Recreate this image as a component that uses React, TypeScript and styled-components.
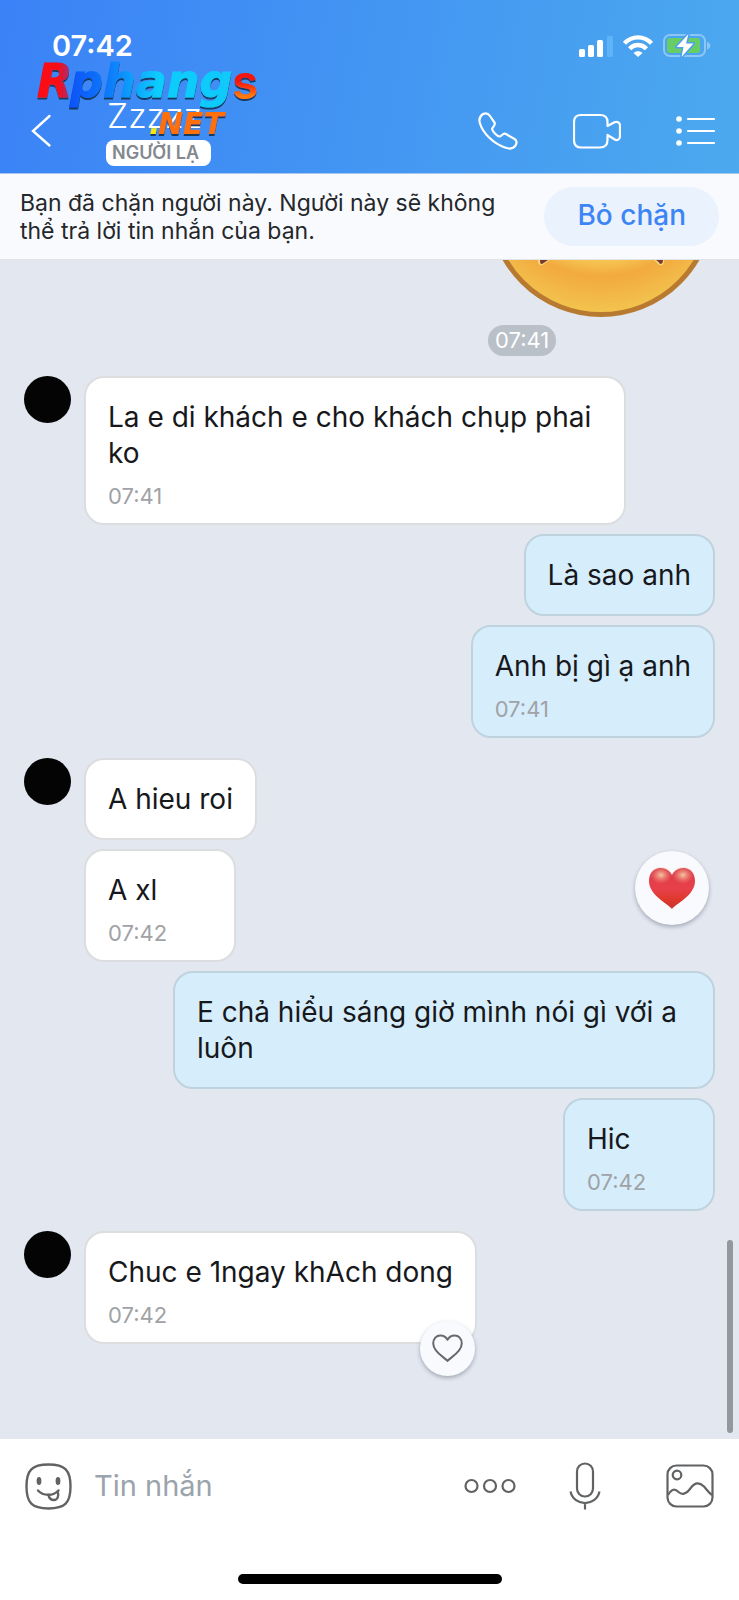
import React from "react";
import styled, { createGlobalStyle, css } from "styled-components";

const GlobalStyle = createGlobalStyle`
  *, *::before, *::after { box-sizing: border-box; }
  body { margin: 0; background: #ffffff; }
  body, button, input { font-family: Inter, Roboto, "Liberation Sans", sans-serif; }
  h1, p { margin: 0; }
  svg { display: block; }
`;

const Screen = styled.div`
  display: flex;
  flex-direction: column;
  min-height: 100vh;
  color: #16181b;
`;

const Header = styled.header`
  position: relative;
  background: linear-gradient(100deg, #3a82f7 0%, #4ca9ee 100%);
  border-bottom: 1px solid #a9c6ee;
  color: #ffffff;
`;

const StatusBar = styled.div`
  display: flex;
  align-items: center;
  justify-content: space-between;
  height: 92px;
  padding: 0 28px 0 52px;
`;

const Clock = styled.time`
  font-size: 29px;
  line-height: 36px;
  font-weight: 600;
`;

const StatusIcons = styled.div`
  display: flex;
  align-items: center;
  gap: 10px;
`;

const NavBar = styled.div`
  display: flex;
  align-items: flex-start;
  height: 81px;
  padding: 0 24px 0 28px;
`;

const IconButton = styled.button`
  display: flex;
  align-items: center;
  justify-content: center;
  flex: none;
  padding: 0;
  border: 0;
  background: none;
  color: inherit;
  cursor: pointer;
`;

const BackButton = styled(IconButton)`
  margin-top: 20px;
`;

const Contact = styled.div`
  display: flex;
  flex-direction: column;
  align-items: flex-start;
  flex: 1;
  gap: 2px;
  padding: 2px 0 0 50px;
`;

const ContactName = styled.h1`
  padding-left: 1px;
  font-size: 34px;
  line-height: 44px;
  font-weight: 300;
`;

const ContactTag = styled.span`
  padding: 0 12px 0 6px;
  border-radius: 8px;
  background: #ffffff;
  color: #83888f;
  font-size: 18px;
  line-height: 26px;
  font-weight: 600;
`;

const NavActions = styled.div`
  display: flex;
  align-items: center;
  gap: 55px;
  margin-top: 20px;
`;

const SiteMark = styled.svg`
  position: absolute;
  left: 34px;
  top: 54px;
  pointer-events: none;
`;

const Notice = styled.section`
  display: flex;
  align-items: center;
  justify-content: space-between;
  gap: 20px;
  padding: 13px 20px;
  background: #f9fafd;
  border-bottom: 1px solid #e0e3e9;
`;

const NoticeText = styled.p`
  flex: 1;
  color: #24272b;
  font-size: 23px;
  line-height: 28px;
`;

const UnblockButton = styled.button`
  flex: none;
  height: 59px;
  padding: 0 33px 3px;
  border: 0;
  border-radius: 30px;
  background: #eaf2fe;
  color: #3d85f5;
  font-size: 28px;
  line-height: 36px;
  font-weight: 500;
  cursor: pointer;
`;

const Chat = styled.main`
  position: relative;
  display: flex;
  flex-direction: column;
  flex: 1;
  gap: 20px;
  padding: 0 24px 92px;
  background: #e2e7f0;
`;

const StickerMessage = styled.div`
  display: flex;
  flex-direction: column;
  align-items: flex-start;
  gap: 8px;
  align-self: flex-end;
`;

const TimeChip = styled.time`
  padding: 0 7px;
  border-radius: 16px;
  background: #b9c0c8;
  color: #ffffff;
  font-size: 22px;
  line-height: 31px;
`;

const Turns = styled.div`
  display: flex;
  flex-direction: column;
  gap: 9px;
`;

const Received = styled.div`
  display: flex;
  align-items: flex-start;
  gap: 13px;
`;

const Avatar = styled.span`
  flex: none;
  width: 47px;
  height: 47px;
  border-radius: 50%;
  background: #040405;
`;

const Stack = styled.div<{ $mine?: boolean }>`
  display: flex;
  flex-direction: column;
  flex: 1;
  gap: 9px;
  align-items: ${(p) => (p.$mine ? "flex-end" : "flex-start")};
`;

const BubbleRow = styled.div`
  display: flex;
  align-items: flex-start;
  justify-content: space-between;
  align-self: stretch;
  padding-right: 6px;
`;

const BubbleBox = styled.article<{ $mine?: boolean; $timed?: boolean }>`
  position: relative;
  max-width: 542px;
  padding: 21px 22px;
  border: 2px solid #dcdddf;
  border-radius: 20px;
  background: #ffffff;
  ${(p) =>
    p.$timed &&
    css`
      min-width: 152px;
      padding-bottom: 14px;
    `}
  ${(p) =>
    p.$mine &&
    css`
      border-color: #bfd3de;
      background: #d6eefc;
    `}
`;

const BubbleText = styled.p`
  font-size: 28px;
  line-height: 36px;
`;

const BubbleTime = styled.time`
  display: block;
  margin-top: 12px;
  color: #a0a2a5;
  font-size: 22px;
  line-height: 26px;
`;

const RoundButton = styled(IconButton)<{ $size: number }>`
  width: ${(p) => p.$size}px;
  height: ${(p) => p.$size}px;
  border-radius: 50%;
  background: #f9fafd;
  box-shadow: 0 2px 4px rgba(70, 78, 92, 0.4);
`;

const ReactionButton = styled(RoundButton)`
  margin-top: 2px;
`;

const LikeButton = styled(RoundButton)`
  position: absolute;
  right: 0;
  bottom: -34px;
  color: #66696c;
`;

const ScrollThumb = styled.span`
  position: absolute;
  right: 6px;
  bottom: 6px;
  width: 6px;
  height: 193px;
  border-radius: 3px;
  background: #93989f;
`;

const Footer = styled.footer`
  display: flex;
  flex-direction: column;
  align-items: center;
  gap: 64px;
  padding: 23px 25px 16px;
  background: #ffffff;
`;

const Composer = styled.form`
  display: flex;
  align-items: center;
  width: 100%;
  color: #606264;
`;

const MessageInput = styled.input`
  flex: 1;
  min-width: 0;
  padding: 0 0 0 22px;
  border: 0;
  outline: 0;
  background: none;
  color: #16181b;
  font-size: 29px;
  line-height: 36px;
  &::placeholder { color: #9ba3ab; opacity: 1; }
`;

const ComposerActions = styled.div`
  display: flex;
  align-items: center;
  gap: 53px;
`;

const PictureButton = styled(IconButton)`
  margin-left: 12px;
`;

const HomeIndicator = styled.span`
  width: 264px;
  height: 10px;
  border-radius: 5px;
  background: #000000;
`;

const HEART =
  "M24 42C20.500 37 1 28.500 1 14C1 6 6 1 12.500 1C18 1 22 4 24 8C26 4 30 1 35.500 1C42 1 47 6 47 14C47 28.500 27.500 37 24 42Z";

function Bubble({
  children,
  time,
  mine,
  extra,
}: {
  children: React.ReactNode;
  time?: string;
  mine?: boolean;
  extra?: React.ReactNode;
}) {
  return (
    <BubbleBox $mine={mine} $timed={Boolean(time)}>
      <BubbleText>{children}</BubbleText>
      {time && <BubbleTime>{time}</BubbleTime>}
      {extra}
    </BubbleBox>
  );
}

function Signal() {
  return (
    <svg width="34" height="22" viewBox="0 0 34 22" fill="#fff" aria-hidden="true">
      <rect x="0" y="14" width="6" height="8" rx="1.500" />
      <rect x="9" y="10" width="6" height="12" rx="1.500" />
      <rect x="18" y="5" width="6" height="17" rx="1.500" />
      <rect x="28" y="1" width="6" height="21" rx="1.500" fill="#5fb4f8" />
    </svg>
  );
}

function Wifi() {
  return (
    <svg width="30" height="22" viewBox="0 0 30 22" aria-hidden="true">
      <g fill="none" stroke="#fff" strokeWidth="4.400">
        <path d="M1.500 8.300C9 .4 21 .4 28.500 8.300" />
        <path d="M6.600 13.800C11.400 8.800 18.600 8.800 23.400 13.800" />
      </g>
      <path d="M10.500 18C13 15.600 17 15.600 19.500 18L15 22Z" fill="#fff" />
    </svg>
  );
}

function Battery() {
  return (
    <svg width="48" height="24" viewBox="0 0 48 24" aria-hidden="true">
      <rect x="1" y="1" width="41" height="21" rx="6" fill="none" stroke="#8cc6f6" strokeWidth="2" />
      <path d="M44 8C48.500 9 48.500 14.500 44 15.500Z" fill="#8cc6f6" />
      <rect x="4" y="4" width="33" height="15" rx="3" fill="#69cd66" />
      <path
        d="M25.500 0L13.500 13H20.500L18.500 23L30.500 9.500H23Z"
        fill="#fff"
        stroke="#4a9ff0"
        strokeWidth="3"
        paintOrder="stroke"
        strokeLinejoin="round"
      />
    </svg>
  );
}

function Logo() {
  return (
    <SiteMark width="244" height="90" viewBox="0 0 244 90" role="img" aria-label="Rphangs.NET">
      <defs>
        <linearGradient id="mark-r" x1="0" x2="1">
          <stop offset="0.600" stopColor="#fb0a12" />
          <stop offset="1" stopColor="#8b3b93" />
        </linearGradient>
        <linearGradient id="mark-blue" x1="0" x2="1">
          <stop offset="0" stopColor="#0a52f6" />
          <stop offset="0.250" stopColor="#0f7cfb" />
          <stop offset="0.400" stopColor="#0fa4fb" />
          <stop offset="0.550" stopColor="#0ccdfc" />
          <stop offset="1" stopColor="#12c9fb" />
        </linearGradient>
        <linearGradient id="mark-s" x1="0" y1="0" x2="0" y2="1">
          <stop offset="0.500" stopColor="#f3150f" />
          <stop offset="0.750" stopColor="#ff7a08" />
        </linearGradient>
        <filter id="mark-edge" x="-5%" y="-5%" width="115%" height="120%">
          <feDropShadow dx="0" dy="2" stdDeviation="0" floodColor="#173a63" />
        </filter>
      </defs>
      <g
        fontFamily='"DejaVu Sans", sans-serif'
        fontWeight="700"
        fontStyle="italic"
        strokeLinejoin="miter"
        filter="url(#mark-edge)"
      >
        <text x="3" y="43" fontSize="46" fill="url(#mark-r)" stroke="url(#mark-r)">R</text>
        <text x="36" y="43" fontSize="46" fill="url(#mark-blue)" stroke="url(#mark-blue)">phang</text>
        <text x="115" y="80" fontSize="30" fill="#f2e90f">.</text>
        <text x="124" y="80" fontSize="30" fill="#ff7008">NET</text>
      </g>
      <text
        x="198"
        y="45"
        fontFamily="Inter, sans-serif"
        fontWeight="600"
        fontSize="48"
        fill="url(#mark-s)"
        filter="url(#mark-edge)"
      >
        s
      </text>
    </SiteMark>
  );
}

function Sticker() {
  return (
    <svg width="227" height="57" viewBox="0 0 227 57" role="img" aria-label="Emoji">
      <defs>
        <radialGradient id="face" gradientUnits="userSpaceOnUse" cx="113" cy="-100" r="157">
          <stop offset="0.640" stopColor="#f6c552" />
          <stop offset="0.740" stopColor="#f2aa3e" />
          <stop offset="1" stopColor="#f3c750" />
        </radialGradient>
      </defs>
      <circle cx="113" cy="-56.500" r="111" fill="url(#face)" stroke="#b87a31" strokeWidth="5" />
      <path d="M50 0H62C58 2 55 6 52 5C50 4 50 2 50 0ZM166 0H176C176 4 175 6 172 5C170 5 169 2 166 0Z" fill="#f9dc7d" />
      <path d="M52 0H60C57 2 55 4 53 4C52 3 52 2 52 0ZM168 0H175C175 3 174 4 172 4C171 3 170 1 168 0Z" fill="#7b3b34" />
    </svg>
  );
}

function PhoneIcon() {
  return (
    <svg width="40" height="38" viewBox="0 0 40 38" fill="none" stroke="currentColor" strokeWidth="2.200" strokeLinejoin="round" aria-hidden="true">
      <path d="M5 2C8 .5 10 1 12 4L16.500 10.500C18 13 14.500 15 14 17C15 20 19 24 21.500 24.500C23.500 24.500 25 20.500 28 22L36.500 27C39 28.500 39 31 37.500 33.500C35 37.500 31 37 27 35.500C15 31.500 5 21 2 11.500C.5 7 2 4 5 2Z" />
    </svg>
  );
}

function VideoIcon() {
  return (
    <svg width="48" height="36" viewBox="0 0 48 36" fill="none" stroke="currentColor" strokeWidth="2.200" strokeLinejoin="round" aria-hidden="true">
      <path d="M8 2H27C32 2 34.500 4.500 34.500 9V13L41 9.500C44 8 47 9 47 13V23C47 27 44 28 41 26L34.500 22V27C34.500 32 32 34.500 27 34.500H8C3.500 34.500 1 32 1 27V9C1 4.500 3.500 2 8 2Z" />
    </svg>
  );
}

function ListIcon() {
  return (
    <svg width="39" height="30" viewBox="0 0 39 30" fill="currentColor" aria-hidden="true">
      <circle cx="3" cy="3" r="2.800" />
      <circle cx="3" cy="15" r="2.800" />
      <circle cx="3" cy="27" r="2.800" />
      <path d="M12 3H38M12 15H38M12 27H38" stroke="currentColor" strokeWidth="2.200" strokeLinecap="round" />
    </svg>
  );
}

function HeartIcon() {
  return (
    <svg width="48" height="43" viewBox="0 0 48 43" aria-hidden="true">
      <defs>
        <linearGradient id="heart-body" x1="0" y1="0" x2="0" y2="1">
          <stop offset="0" stopColor="#d93b49" />
          <stop offset="0.500" stopColor="#e8404b" />
          <stop offset="0.750" stopColor="#df392f" />
          <stop offset="1" stopColor="#c9342c" />
        </linearGradient>
        <radialGradient id="heart-shine">
          <stop offset="0" stopColor="#f6c9a4" />
          <stop offset="1" stopColor="#f08070" stopOpacity="0" />
        </radialGradient>
      </defs>
      <path d={HEART} fill="url(#heart-body)" />
      <ellipse cx="13" cy="8" rx="11" ry="9" fill="url(#heart-shine)" />
      <ellipse cx="35" cy="8" rx="11" ry="9" fill="url(#heart-shine)" />
    </svg>
  );
}

function HeartOutline() {
  return (
    <svg width="31" height="29" viewBox="-1 -1 50 46" fill="none" stroke="currentColor" strokeWidth="3.200" strokeLinejoin="round" aria-hidden="true">
      <path d={HEART} />
    </svg>
  );
}

function StickerIcon() {
  return (
    <svg width="47" height="47" viewBox="0 0 47 47" fill="none" stroke="currentColor" strokeWidth="2.400" strokeLinecap="round" aria-hidden="true">
      <path d="M23.500 1.500C40 1.500 45.500 7 45.500 23.500C45.500 40 40 45.500 23.500 45.500C7 45.500 1.500 40 1.500 23.500C1.500 7 7 1.500 23.500 1.500Z" />
      <ellipse cx="14" cy="18" rx="2.400" ry="4" fill="currentColor" stroke="none" />
      <ellipse cx="33" cy="18" rx="2.400" ry="4" fill="currentColor" stroke="none" />
      <path d="M13 27.500C18 33 28 33.500 33.500 27.500" />
      <path d="M23.500 32C24 35 25.500 37 29 37C32.500 37 34 33.500 32.800 28.500" />
    </svg>
  );
}

function MoreIcon() {
  return (
    <svg width="52" height="16" viewBox="0 0 52 16" fill="none" stroke="currentColor" strokeWidth="2.200" aria-hidden="true">
      <circle cx="7.500" cy="8" r="6" />
      <circle cx="26" cy="8" r="6" />
      <circle cx="44.500" cy="8" r="6" />
    </svg>
  );
}

function MicIcon() {
  return (
    <svg width="32" height="48" viewBox="0 0 32 48" fill="none" stroke="currentColor" strokeWidth="2.200" aria-hidden="true">
      <rect x="8" y="1.500" width="16" height="33" rx="8" />
      <path d="M1.500 29.500C5 45 27 45 30.500 29.500M16 41V47.500" />
    </svg>
  );
}

function PictureIcon() {
  return (
    <svg width="48" height="44" viewBox="0 0 48 44" fill="none" stroke="currentColor" strokeWidth="2.200" aria-hidden="true">
      <rect x="1.500" y="1.500" width="45" height="41" rx="9" />
      <circle cx="11" cy="11" r="4.300" />
      <path d="M2 31C6 24.500 9 24.500 12.500 28C16 31 20 30.500 24 25C29 18 33 18 38 22.500C41 26 43 29 46 31" />
    </svg>
  );
}

export default function App() {
  return (
    <Screen>
      <GlobalStyle />
      <Header>
        <StatusBar>
          <Clock>07:42</Clock>
          <StatusIcons>
            <Signal />
            <Wifi />
            <Battery />
          </StatusIcons>
        </StatusBar>
        <NavBar>
          <BackButton type="button" aria-label="Quay lại">
            <svg width="28" height="36" viewBox="0 0 28 36" fill="none" stroke="currentColor" strokeWidth="2.400" strokeLinecap="round" aria-hidden="true">
              <path d="M21.500 4L5 19L21.500 33.500" />
            </svg>
          </BackButton>
          <Contact>
            <ContactName>Zzzzz</ContactName>
            <ContactTag>NGƯỜI LẠ</ContactTag>
          </Contact>
          <NavActions>
            <IconButton type="button" aria-label="Gọi thoại"><PhoneIcon /></IconButton>
            <IconButton type="button" aria-label="Gọi video"><VideoIcon /></IconButton>
            <IconButton type="button" aria-label="Tùy chọn"><ListIcon /></IconButton>
          </NavActions>
        </NavBar>
        <Logo />
      </Header>

      <Notice>
        <NoticeText>Bạn đã chặn người này. Người này sẽ không thể trả lời tin nhắn của bạn.</NoticeText>
        <UnblockButton type="button">Bỏ chặn</UnblockButton>
      </Notice>

      <Chat>
        <StickerMessage>
          <Sticker />
          <TimeChip>07:41</TimeChip>
        </StickerMessage>

        <Turns>
          <Received>
            <Avatar />
            <Stack>
              <Bubble time="07:41">La e di khách e cho khách chụp phai ko</Bubble>
            </Stack>
          </Received>
          <Stack $mine>
            <Bubble mine>Là sao anh</Bubble>
            <Bubble mine time="07:41">Anh bị gì ạ anh</Bubble>
          </Stack>
        </Turns>

        <Turns>
          <Received>
            <Avatar />
            <Stack>
              <Bubble>A hieu roi</Bubble>
              <BubbleRow>
                <Bubble time="07:42">A xl</Bubble>
                <ReactionButton $size={74} type="button" aria-label="Yêu thích"><HeartIcon /></ReactionButton>
              </BubbleRow>
            </Stack>
          </Received>
          <Stack $mine>
            <Bubble mine>E chả hiểu sáng giờ mình nói gì với a luôn</Bubble>
            <Bubble mine time="07:42">Hic</Bubble>
          </Stack>
        </Turns>

        <Turns>
          <Received>
            <Avatar />
            <Stack>
              <Bubble
                time="07:42"
                extra={<LikeButton $size={55} type="button" aria-label="Thích"><HeartOutline /></LikeButton>}
              >
                Chuc e 1ngay khAch dong
              </Bubble>
            </Stack>
          </Received>
        </Turns>
        <ScrollThumb />
      </Chat>

      <Footer>
        <Composer onSubmit={(e) => e.preventDefault()}>
          <IconButton type="button" aria-label="Nhãn dán"><StickerIcon /></IconButton>
          <MessageInput type="text" placeholder="Tin nhắn" aria-label="Tin nhắn" />
          <ComposerActions>
            <IconButton type="button" aria-label="Thêm"><MoreIcon /></IconButton>
            <IconButton type="button" aria-label="Ghi âm"><MicIcon /></IconButton>
            <PictureButton type="button" aria-label="Hình ảnh"><PictureIcon /></PictureButton>
          </ComposerActions>
        </Composer>
        <HomeIndicator />
      </Footer>
    </Screen>
  );
}
